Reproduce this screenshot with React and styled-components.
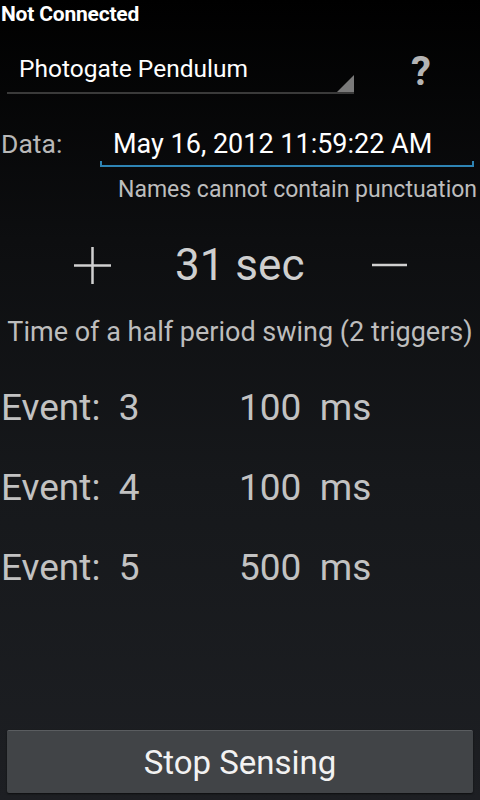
import styled, { createGlobalStyle } from "styled-components";

const Global = createGlobalStyle`
  html, body {
    margin: 0;
    padding: 0;
    background: #000;
  }
  body {
    font-family: Roboto, "Liberation Sans", sans-serif;
  }
`;

const Screen = styled.div`
  width: 480px;
  height: 800px;
  display: flex;
  flex-direction: column;
  background: linear-gradient(to bottom, #000 0%, #0d0e10 30%, #16181b 60%, #1d1f23 100%);
  overflow: hidden;
`;

const Status = styled.div`
  font-weight: 700;
  font-size: 21px;
  color: #fff;
  padding: 2px 0 0 1px;
  height: 28px;
  letter-spacing: -0.2px;
`;

const TopRow = styled.div`
  display: flex;
  align-items: center;
  margin-top: 16px;
  height: 50px;
`;

const Spinner = styled.div`
  position: relative;
  margin-left: 7px;
  width: 347px;
  height: 46px;
  border-bottom: 2px solid #3a3a3a;
  box-sizing: border-box;
  color: #fff;
  font-size: 24.5px;
  padding: 6px 0 0 12px;
  &::after {
    content: "";
    position: absolute;
    right: 0;
    bottom: 0;
    width: 17px;
    height: 17px;
    background: #7a7a7a;
    clip-path: polygon(100% 0, 100% 100%, 0 100%);
  }
`;

const Help = styled.div`
  margin-left: 57px;
  font-size: 40px;
  font-weight: 700;
  color: #b4b4b4;
`;

const DataRow = styled.div`
  display: flex;
  align-items: flex-start;
  margin-top: 32px;
`;

const Label = styled.div`
  width: 99px;
  font-size: 26.5px;
  color: #b8b8b8;
  padding-left: 1px;
`;

const Field = styled.div`
  flex: 1;
  margin-right: 6px;
`;

const FieldText = styled.div`
  font-size: 27px;
  color: #fff;
  padding-left: 13px;
  height: 33px;
`;

const FieldLine = styled.div`
  height: 4px;
  border: 2px solid #2e84b4;
  border-top: none;
`;

const Hint = styled.div`
  font-size: 23px;
  color: #bdbdbd;
  padding-left: 118px;
  margin-top: 9px;
  white-space: nowrap;
`;

const Stepper = styled.div`
  display: flex;
  align-items: center;
  margin-top: 37px;
  height: 50px;
  color: #cfcfcf;
`;

const StepSign = styled.div`
  width: ${(p) => p.$w}px;
  margin-left: ${(p) => p.$ml}px;
  display: flex;
  justify-content: center;
  svg {
    display: block;
  }
`;

const Value = styled.div`
  font-size: 44px;
  margin-left: 64px;
  width: 197px;
  color: #cfcfcf;
`;

const Caption = styled.div`
  font-size: 27px;
  color: #bdbdbd;
  text-align: center;
  margin-top: 26px;
  white-space: nowrap;
`;

const Events = styled.div`
  display: flex;
  flex-direction: column;
  margin-top: 19px;
`;

const EventRow = styled.div`
  display: flex;
  height: 80px;
  align-items: center;
  font-size: 37px;
  color: #c2c2c2;
`;

const EventName = styled.div`
  width: 238px;
  padding-left: 1px;
  white-space: pre;
`;

const EventValue = styled.div`
  white-space: pre;
`;

const Spacer = styled.div`
  flex: 1;
`;

const Button = styled.button`
  margin: 0 7px 7px;
  height: 63px;
  border: none;
  border-top: 1px solid #5a5d60;
  border-radius: 2px;
  background: #414447;
  color: #f2f2f2;
  font-family: Roboto, "Liberation Sans", sans-serif;
  font-size: 33px;
  padding-top: 2px;
  box-shadow: 0 1px 2px rgba(0, 0, 0, 0.6);
`;

const events = [
  { id: 3, ms: 100 },
  { id: 4, ms: 100 },
  { id: 5, ms: 500 },
];

function App() {
  return (
    <Screen>
      <Global />
      <Status>Not Connected</Status>
      <TopRow>
        <Spinner>Photogate Pendulum</Spinner>
        <Help>?</Help>
      </TopRow>
      <DataRow>
        <Label>Data:</Label>
        <Field>
          <FieldText>May 16, 2012 11:59:22 AM</FieldText>
          <FieldLine />
        </Field>
      </DataRow>
      <Hint>Names cannot contain punctuation</Hint>
      <Stepper>
        <StepSign $w={37} $ml={74}>
          <svg width="37" height="37" viewBox="0 0 37 37">
            <path d="M18.5 0V37M0 18.5H37" stroke="#d0d0d0" strokeWidth="2.5" />
          </svg>
        </StepSign>
        <Value>31 sec</Value>
        <StepSign $w={35} $ml={0}>
          <svg width="35" height="4" viewBox="0 0 35 4">
            <path d="M0 2H35" stroke="#d0d0d0" strokeWidth="2.5" />
          </svg>
        </StepSign>
      </Stepper>
      <Caption>Time of a half period swing (2 triggers)</Caption>
      <Events>
        {events.map((e) => (
          <EventRow key={e.id}>
            <EventName>{`Event:  ${e.id}`}</EventName>
            <EventValue>{`${e.ms}  ms`}</EventValue>
          </EventRow>
        ))}
      </Events>
      <Spacer />
      <Button>Stop Sensing</Button>
    </Screen>
  );
}

export default App;
